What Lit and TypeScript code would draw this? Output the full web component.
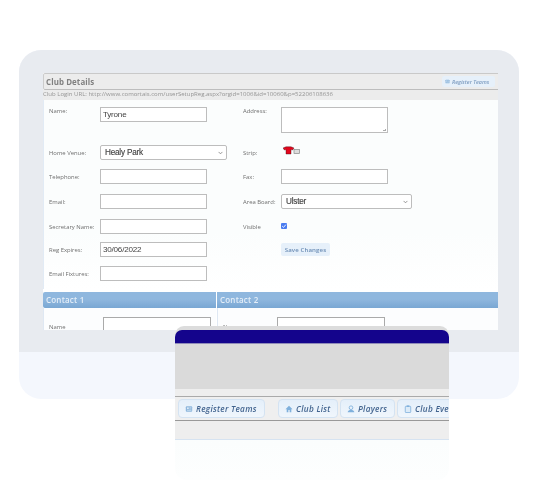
import { LitElement, html, css, svg } from "lit";
import { customElement } from "lit/decorators.js";

const regIcon = svg`<rect x="1" y="1.5" width="8" height="7" rx="1.2" fill="#8db6dc"/><rect x="2.5" y="3" width="2.2" height="2.2" fill="#dcebf8"/><path d="M5.5 3.4H8M5.5 5H8M2.5 6.8H8" stroke="#dcebf8" stroke-width=".7"/>`;
const homeIcon = svg`<path d="M5 1 .6 5.2h1.5V9h2.1V6.4h1.6V9h2.1V5.2h1.5Z" fill="#7fb0dc"/>`;
const userIcon = svg`<circle cx="5" cy="3.4" r="2.3" fill="none" stroke="#7fb0dc" stroke-width="1.1"/><path d="M.8 9.2C1 7 3 6.3 5 6.3S9 7 9.2 9.2Z" fill="#7fb0dc"/>`;
const clipIcon = svg`<rect x="1.6" y="1.6" width="6.8" height="7.8" rx=".8" fill="#dcebf8" stroke="#7fb0dc" stroke-width="1"/><rect x="3.4" y=".5" width="3.2" height="2" fill="#7fb0dc"/>`;
const chevron = svg`<path d="M.7.7 3 3 5.3.7" fill="none" stroke="#777" stroke-width=".9"/>`;

@customElement("app-root")
export class AppRoot extends LitElement {
  static styles = css`
    :host { display: block; position: relative; width: 538px; height: 492px; overflow: hidden; background: #fff; font-family: "Open Sans", "DejaVu Sans", sans-serif; }
    .page { padding: 50px 19px 0; }
    .frame { width: 500px; height: 349px; border-radius: 22px; overflow: hidden; background: #f4f7fd; }
    .bezel { height: 302px; padding: 23px 21px 0 24px; box-sizing: border-box; background: #e8ebf0; }
    .screen { width: 455px; height: 257px; overflow: hidden; background: #fff; filter: blur(.55px); }

    .title { height: 17px; box-sizing: border-box; display: flex; align-items: center; justify-content: space-between; padding: 0 3px 0 2px; background: #ececec; border-top: 1.5px solid #c9c9c9; border-bottom: 1.5px solid #bdbdbd; border-left: 1px solid #ccc; border-radius: 2px 0 0 2px; }
    .title b { font-size: 7.9px; color: #808080; letter-spacing: .1px; }
    .mini { height: 11px; width: 53px; box-sizing: border-box; display: flex; align-items: center; gap: 2px; padding-left: 3px; background: #e6f0fa; border-radius: 2px; font-size: 5.4px; font-weight: 600; font-style: italic; color: #7d9cc0; white-space: nowrap; overflow: hidden; }
    .mini svg { width: 5px; height: 5px; flex: none; }
    .url { height: 10px; background: #ececec; font-size: 6.03px; line-height: 8px; color: #949494; white-space: nowrap; }

    .form { height: 189px; box-sizing: border-box; border-left: 1px solid #e2ebf5; padding: 7px 0 0 5px; background: linear-gradient(#fbfdfd 70%, #fff); display: grid; grid-template-columns: 51px 143px 38px 1fr; grid-template-rows: 38px 24px 25px 25px 23px 24px 15px; }
    .lbl { font-size: 5.9px; color: #6e6e6e; line-height: 17px; white-space: nowrap; }
    .lbl.top { line-height: 9px; }
    .inp { width: 107px; height: 15px; box-sizing: border-box; border: 1px solid #bdbdbd; background: #fff; font: 8.1px/14px "Liberation Sans", sans-serif; letter-spacing: -.22px; color: #444; padding-left: 2px; }
    .area { height: 26px; position: relative; }
    .area::after { content: ""; position: absolute; right: 1px; bottom: 1px; width: 3px; height: 3px; background: linear-gradient(135deg, transparent 50%, #aaa 50%); }
    .sel { height: 15px; box-sizing: border-box; border: 1px solid #bdbdbd; border-radius: 2px; background: #fff; display: flex; align-items: center; justify-content: space-between; padding: 0 3px 0 4px; font: 8.2px "Liberation Sans", sans-serif; letter-spacing: -.22px; color: #444; -webkit-text-stroke: .15px #444; }
    .sel svg { width: 5px; height: 4px; }
    .w127 { width: 127px; }
    .w131 { width: 131px; }
    .shirt { width: 18px; height: 10px; margin: 1px 0 0 2px; display: block; }
    .check { width: 6px; height: 6px; border-radius: 1px; background: #4a7cf0; margin-top: 4px; display: flex; }
    .check svg { width: 6px; height: 6px; }
    .save { width: 49px; height: 13px; margin-top: 1px; background: #e6f0fa; border-radius: 2px; font-size: 6.1px; font-weight: 600; line-height: 13px; text-align: center; color: #6b8db5; white-space: nowrap; letter-spacing: .1px; }

    .heads { display: grid; grid-template-columns: 173px 1fr; column-gap: 1px; height: 15px; margin-top: 3px; }
    .head { background: linear-gradient(#8fb7de 45%, #79a7d3); color: #e4eef8; font-size: 8px; font-weight: 600; line-height: 16px; padding-left: 3px; letter-spacing: .2px; }
    .head.first { border-radius: 2px 0 0 2px; }
    .contacts { display: grid; grid-template-columns: 173px 1fr; column-gap: 1px; margin-top: 1px; }
    .contact { height: 30px; box-sizing: border-box; border-left: 1px solid #dfe8f3; background: #fcfdfe; padding: 9px 0 0 5px; display: grid; grid-template-columns: 54px 108px; }
    .contact .lbl { line-height: 15px; padding-top: 3px; }
    .contact .inp { width: 108px; height: 20px; border-color: #aaa; }

    .card { position: absolute; left: 175px; top: 326px; width: 274px; height: 154px; border-radius: 9px 9px 12px 12px; overflow: hidden; background: linear-gradient(#fbfdfd 75%, #fdfefe); display: flex; flex-direction: column; }
    .inner { filter: blur(.5px); display: flex; flex-direction: column; }
    .cap { height: 4px; background: #dcdcdc; flex: none; }
    .navy { height: 14px; flex: none; box-sizing: border-box; background: #14048c; border-radius: 7px 7px 0 0; border-bottom: 1px solid #8f8bb8; margin-top: 0; }
    .capped { background: #dcdcdc; }
    .grey { height: 45px; flex: none; background: #dadada; }
    .pale { height: 7px; flex: none; background: #eee; }
    .tabs { height: 25px; flex: none; box-sizing: border-box; border-top: 1px solid #aaa; border-bottom: 1px solid #999; background: #efefef; display: flex; align-items: center; padding-left: 3px; gap: 2px; overflow: hidden; }
    .tab { height: 19px; box-sizing: border-box; flex: none; display: flex; align-items: center; gap: 3px; padding-left: 6px; border: 1px solid #d4e3f2; border-radius: 4px; background: linear-gradient(#e4effa, #f0f6fc); color: #42648f; font-size: 8.2px; font-weight: 600; font-style: italic; white-space: nowrap; letter-spacing: .3px; }
    .tab svg { width: 8px; height: 8px; flex: none; }
    .tab.reg { width: 87px; margin-right: 11px; }
    .tab.list { width: 60px; }
    .tab.play { width: 55px; }
    .tab.events { width: 70px; }
    .pale2 { height: 19px; flex: none; box-sizing: border-box; background: #eee; border-bottom: 1px solid #d6e3f1; }
  `;

  render() {
    return html`
      <div class="page">
        <div class="frame">
          <div class="bezel">
            <div class="screen">
              <div class="title"><b>Club Details</b>
                <span class="mini"><svg viewBox="0 0 10 10">${regIcon}</svg>Register Teams</span></div>
              <div class="url">Club Login URL: http://www.comortais.com/userSetupReg.aspx?orgid=1006&amp;id=10060&amp;p=52206108636</div>
              <div class="form">
                <span class="lbl top">Name:</span><div class="inp">Tyrone</div>
                <span class="lbl top">Address:</span><div class="inp area"></div>

                <span class="lbl">Home Venue:</span>
                <div class="sel w127">Healy Park<svg viewBox="0 0 6 4">${chevron}</svg></div>
                <span class="lbl">Strip:</span>
                <svg class="shirt" viewBox="0 0 18 10"><path d="M0 2 3 .8h5L11 2 9.6 4 8 3.6V8H3V3.6L1.4 4Z" fill="#e3061c" stroke="#401015" stroke-width=".4"/><rect x="11" y="3.5" width="5.5" height="4" fill="#ddd" stroke="#888" stroke-width=".7"/></svg>

                <span class="lbl">Telephone:</span><div class="inp"></div>
                <span class="lbl">Fax:</span><div class="inp"></div>

                <span class="lbl">Email:</span><div class="inp"></div>
                <span class="lbl">Area Board:</span>
                <div class="sel w131">Ulster<svg viewBox="0 0 6 4">${chevron}</svg></div>

                <span class="lbl">Secretary Name:</span><div class="inp"></div>
                <span class="lbl">Visible</span>
                <div class="check"><svg viewBox="0 0 6 6"><path d="M1.2 3.1 2.5 4.4 4.9 1.6" fill="none" stroke="#fff" stroke-width=".9"/></svg></div>

                <span class="lbl">Reg Expires:</span><div class="inp">30/06/2022</div>
                <span></span><div class="save">Save Changes</div>

                <span class="lbl">Email Fixtures:</span><div class="inp"></div>
                <span></span><span></span>
              </div>
              <div class="heads">
                <div class="head first">Contact 1</div>
                <div class="head">Contact 2</div>
              </div>
              <div class="contacts">
                <div class="contact"><span class="lbl">Name</span><div class="inp"></div></div>
                <div class="contact"><span class="lbl">Name</span><div class="inp"></div></div>
              </div>
            </div>
          </div>
        </div>
      </div>
      <div class="card">
        <div class="inner">
          <div class="cap"></div>
          <div class="capped"><div class="navy"></div></div>
          <div class="grey"></div>
          <div class="pale"></div>
          <div class="tabs">
            <div class="tab reg"><svg viewBox="0 0 10 10">${regIcon}</svg>Register Teams</div>
            <div class="tab list"><svg viewBox="0 0 10 10">${homeIcon}</svg>Club List</div>
            <div class="tab play"><svg viewBox="0 0 10 10">${userIcon}</svg>Players</div>
            <div class="tab events"><svg viewBox="0 0 10 10">${clipIcon}</svg>Club Events</div>
          </div>
          <div class="pale2"></div>
        </div>
      </div>
    `;
  }
}
